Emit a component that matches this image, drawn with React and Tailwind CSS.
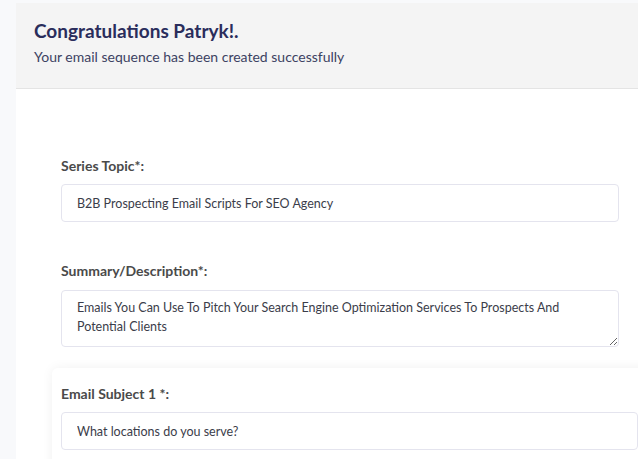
import React from 'react';

const Field = ({ label, value }) => (
  <div>
    <label className="block text-[14px] font-bold text-[#4a4a4a] leading-4 mb-[10px]">{label}</label>
    <input
      readOnly
      value={value}
      className="w-full h-[38px] px-[15px] text-[12.5px] text-[#3b3d4a] bg-white border border-[#e4e4ee] rounded-[4px] outline-none"
    />
  </div>
);

export default function App() {
  return (
    <div className="min-h-screen overflow-hidden bg-[#f8f9fb] pt-[3px] pl-4 font-['Lato','Noto_Sans',sans-serif]">
      <div className="h-[86px] bg-[#f4f4f4] border-b border-[#e4e4e4] pl-[18px] pt-[17px]">
        <h1 className="text-[19px] font-bold leading-[22px] text-[#2a2d5c]">Congratulations Patryk!.</h1>
        <p className="mt-[6px] text-[14px] leading-[18px] text-[#3c4262]">Your email sequence has been created successfully</p>
      </div>

      <div className="bg-white pt-[69px] pb-10 min-h-[400px]">
        <div className="pl-[45px] pr-[19px]">
          <Field label="Series Topic*:" value="B2B Prospecting Email Scripts For SEO Agency" />

          <div className="mt-[41px]">
            <label className="block text-[14px] font-bold text-[#4a4a4a] leading-4 mb-[11px]">Summary/Description*:</label>
            <textarea
              readOnly
              value="Emails You Can Use To Pitch Your Search Engine Optimization Services To Prospects And Potential Clients"
              className="block w-full h-[57px] px-[15px] pt-[7px] text-[12.5px] leading-[19px] text-[#3b3d4a] bg-white border border-[#e4e4ee] rounded-[4px] outline-none"
            />
          </div>
        </div>

        <div className="ml-9 -mr-10 mt-[21px] rounded-md bg-white shadow-[0_0_12px_rgba(0,0,0,0.06)] pl-[9px] pt-[18px] pb-6">
          <div className="pr-10">
            <Field label="Email Subject 1 *:" value="What locations do you serve?" />
          </div>
        </div>
      </div>
    </div>
  );
}
